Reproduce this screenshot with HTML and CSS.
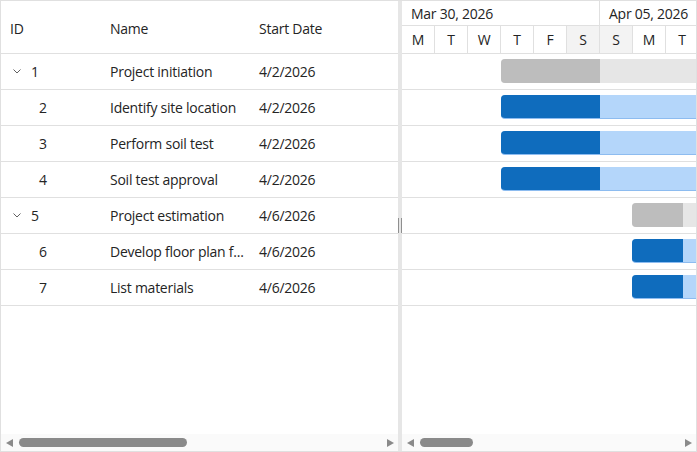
FILE: index.html
```html
<!DOCTYPE html>
<html lang="en">
<head>
    <meta charset="UTF-8">
    <title>Gantt</title>
    <link rel="stylesheet" href="styles.css">
</head>
<body>
    <div class="gantt">
        <div class="grid-pane">
            <div class="grid-head">
                <div class="col col-id">ID</div>
                <div class="col col-name">Name</div>
                <div class="col col-date">Start Date</div>
            </div>
            <div class="grid-body">
                <div class="grid-row">
                    <div class="col col-id"><span class="caret"><svg width="8" height="5" viewBox="0 0 8 5"><path d="M0.5 0.5 L4 4 L7.5 0.5" fill="none" stroke="#616161" stroke-width="1"/></svg></span>1</div>
                    <div class="col col-name">Project initiation</div>
                    <div class="col col-date">4/2/2026</div>
                </div>
                <div class="grid-row">
                    <div class="col col-id child">2</div>
                    <div class="col col-name">Identify site location</div>
                    <div class="col col-date">4/2/2026</div>
                </div>
                <div class="grid-row">
                    <div class="col col-id child">3</div>
                    <div class="col col-name">Perform soil test</div>
                    <div class="col col-date">4/2/2026</div>
                </div>
                <div class="grid-row">
                    <div class="col col-id child">4</div>
                    <div class="col col-name">Soil test approval</div>
                    <div class="col col-date">4/2/2026</div>
                </div>
                <div class="grid-row">
                    <div class="col col-id"><span class="caret"><svg width="8" height="5" viewBox="0 0 8 5"><path d="M0.5 0.5 L4 4 L7.5 0.5" fill="none" stroke="#616161" stroke-width="1"/></svg></span>5</div>
                    <div class="col col-name">Project estimation</div>
                    <div class="col col-date">4/6/2026</div>
                </div>
                <div class="grid-row">
                    <div class="col col-id child">6</div>
                    <div class="col col-name">Develop floor plan f...</div>
                    <div class="col col-date">4/6/2026</div>
                </div>
                <div class="grid-row">
                    <div class="col col-id child">7</div>
                    <div class="col col-name">List materials</div>
                    <div class="col col-date">4/6/2026</div>
                </div>
            </div>
            <div class="scrollbar">
                <span class="arrow arrow-left"></span>
                <div class="track"><div class="thumb thumb-grid"></div></div>
                <span class="arrow arrow-right"></span>
            </div>
        </div>

        <div class="splitter"><span class="handle"></span></div>

        <div class="chart-pane">
            <div class="chart-head">
                <div class="weeks">
                    <div class="week">Mar 30, 2026</div>
                    <div class="week">Apr 05, 2026</div>
                </div>
                <div class="days">
                    <div class="day">M</div>
                    <div class="day">T</div>
                    <div class="day">W</div>
                    <div class="day">T</div>
                    <div class="day">F</div>
                    <div class="day weekend">S</div>
                    <div class="day weekend">S</div>
                    <div class="day">M</div>
                    <div class="day">T</div>
                </div>
            </div>
            <div class="chart-body">
                <div class="chart-row">
                    <div class="bar parent" style="left: 99px; width: 300px;"><div class="progress" style="width: 99px;"></div></div>
                </div>
                <div class="chart-row">
                    <div class="bar" style="left: 99px; width: 300px;"><div class="progress" style="width: 99px;"></div></div>
                </div>
                <div class="chart-row">
                    <div class="bar" style="left: 99px; width: 300px;"><div class="progress" style="width: 99px;"></div></div>
                </div>
                <div class="chart-row">
                    <div class="bar" style="left: 99px; width: 300px;"><div class="progress" style="width: 99px;"></div></div>
                </div>
                <div class="chart-row">
                    <div class="bar parent" style="left: 230px; width: 200px;"><div class="progress" style="width: 51px;"></div></div>
                </div>
                <div class="chart-row">
                    <div class="bar" style="left: 230px; width: 200px;"><div class="progress" style="width: 51px;"></div></div>
                </div>
                <div class="chart-row">
                    <div class="bar" style="left: 230px; width: 200px;"><div class="progress" style="width: 51px;"></div></div>
                </div>
            </div>
            <div class="scrollbar">
                <span class="arrow arrow-left"></span>
                <div class="track"><div class="thumb thumb-chart"></div></div>
                <span class="arrow arrow-right"></span>
            </div>
        </div>
    </div>
</body>
</html>
```

FILE: styles.css
```css
* { box-sizing: border-box; }
body {
    margin: 0;
    font-family: "Open Sans", "Noto Sans", sans-serif;
    font-size: 14px;
    letter-spacing: -0.25px;
    color: #242424;
}

.gantt {
    width: 697px;
    height: 452px;
    border: 1px solid #e0e0e0;
    display: flex;
    overflow: hidden;
    background: #fff;
}

.grid-pane { width: 397px; display: flex; flex-direction: column; }
.chart-pane { flex: 1; display: flex; flex-direction: column; overflow: hidden; min-width: 0; }

.splitter {
    width: 4px;
    background: #e6e6e6;
    position: relative;
}
.splitter .handle {
    position: absolute;
    left: 0;
    top: 217px;
    width: 4px;
    height: 15px;
    border-left: 1px solid #8f8f8f;
    border-right: 1px solid #8f8f8f;
}

.grid-head {
    height: 53px;
    padding-top: 2px;
    display: flex;
    align-items: center;
    border-bottom: 1px solid #e0e0e0;
}
.grid-body { flex: 1; }
.grid-row {
    height: 36px;
    padding-bottom: 1px;
    display: flex;
    align-items: center;
    border-bottom: 1px solid #e0e0e0;
}
.col { padding-left: 9px; white-space: nowrap; overflow: hidden; }
.col-id { width: 100px; display: flex; align-items: center; }
.col-id.child { padding-left: 38px; }
.col-name { width: 150px; }
.col-date { flex: 1; padding-left: 8px; }
.caret { display: inline-flex; width: 21px; padding-left: 3px; margin-top: 1px; }

.chart-head { height: 53px; border-bottom: 1px solid #e0e0e0; }
.weeks { height: 25px; display: flex; border-bottom: 1px solid #e0e0e0; }
.week {
    width: 198px;
    flex-shrink: 0;
    padding-left: 9px;
    line-height: 26px;
    border-right: 1px solid #e0e0e0;
}
.days { height: 27px; display: flex; }
.day {
    width: 33px;
    flex-shrink: 0;
    text-align: center;
    line-height: 28px;
    border-right: 1px solid #e0e0e0;
}
.day.weekend { background: #f3f3f3; }

.chart-body { flex: 1; }
.chart-row { height: 36px; border-bottom: 1px solid #e0e0e0; position: relative; }
.bar {
    position: absolute;
    top: 5px;
    height: 24px;
    border-radius: 4px;
    background: #b4d6fa;
    border-bottom: 1px solid #8dbcf0;
    overflow: hidden;
}
.bar .progress { height: 100%; background: #0f6cbd; }
.bar.parent { background: #e6e6e6; border-bottom: none; }
.bar.parent .progress { background: #bdbdbd; }

.scrollbar {
    height: 17px;
    background: #fafafa;
    display: flex;
    align-items: center;
    padding: 0 4px 0 5px;
}
.track { flex: 1; height: 9px; padding: 0 6px; }
.thumb { height: 9px; border-radius: 5px; background: #8a8a8a; }
.thumb-grid { width: 168px; }
.thumb-chart { width: 53px; }
.arrow { width: 0; height: 0; border-top: 4px solid transparent; border-bottom: 4px solid transparent; }
.arrow-left { border-right: 7px solid #8a8a8a; }
.arrow-right { border-left: 7px solid #8a8a8a; }
```
